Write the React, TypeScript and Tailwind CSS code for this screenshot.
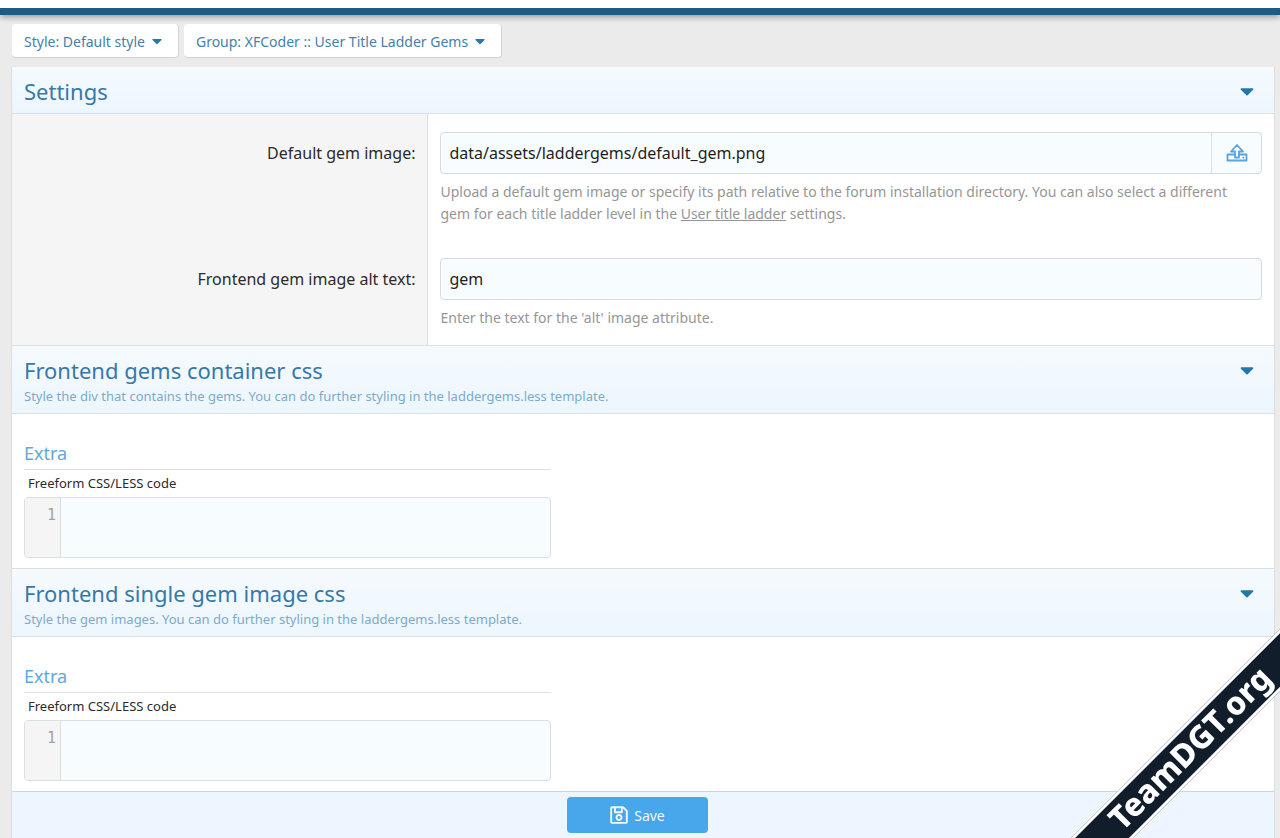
import { FaCaretDown, FaRegSave } from "react-icons/fa";

type SectionHeaderProps = {
  title: string;
  description?: string;
  first?: boolean;
};

type CssPropertyProps = {
  id: string;
  title: string;
  description: string;
};

function MenuButton({ label }: { label: string }) {
  return (
    <button
      type="button"
      className="flex h-[34px] items-center gap-1 rounded border-r border-b border-[#d3d3d3] bg-white pt-[2px] pr-[13px] pl-3 text-[14px] text-[#4580ab]"
    >
      {label}
      <FaCaretDown className="mb-[2px] size-4 text-[#2577b1]" />
    </button>
  );
}

function SectionHeader({ title, description, first }: SectionHeaderProps) {
  return (
    <header
      className={
        "flex items-start justify-between border-b border-[#dbe0e4] bg-linear-to-b from-[#f5fafe] to-[#edf6fe] px-3 pt-[9px] " +
        (first ? "pb-[6px]" : "border-t pb-[3px]")
      }
    >
      <div>
        <h2 className="text-[22px] leading-[31px] text-[#3679a8]">{title}</h2>
        {description && (
          <p className="-mt-1 text-[13px] leading-7 text-[#7cabca]">{description}</p>
        )}
      </div>
      <button type="button" aria-label={`Toggle ${title}`} className="px-1 pt-1 text-[#2577a9]">
        <FaCaretDown className="size-[22px]" />
      </button>
    </header>
  );
}

function UploadIcon() {
  return (
    <svg
      viewBox="0 0 22 20"
      className="h-5 w-[22px]"
      fill="none"
      stroke="currentColor"
      strokeWidth="1.8"
      strokeLinejoin="round"
      strokeLinecap="round"
    >
      <path d="M9 14.500V8.500H5L11 2l6 6.500h-4v6z" />
      <path d="M9 11.500H1.500v6h19v-6H13" />
      <path d="M17.300 14.600h.1" />
    </svg>
  );
}

// Property block with only the freeform "Extra" editor
function CssProperty({ id, title, description }: CssPropertyProps) {
  return (
    <section>
      <SectionHeader title={title} description={description} />
      <div className="px-3 pt-[25px] pb-[10px]">
        <div className="w-[527px] max-w-full">
          <h3 className="border-b border-[#dfdfdf] pb-[2px] text-[18px] leading-7 text-[#62a8de]">
            Extra
          </h3>
          <label htmlFor={id} className="block px-1 text-[13px] leading-[27px] text-[#2b2b2b]">
            Freeform CSS/LESS code
          </label>
          <div className="flex h-[61px] overflow-hidden rounded border border-[#dadfe2] bg-[#f7fcfe]">
            <span className="w-9 border-r border-[#dddddd] bg-[#f5f5f5] pt-1 pr-1 text-right font-['DejaVu_Sans_Mono',monospace] text-[15px] leading-[26px] text-[#a3a3a3]">
              1
            </span>
            <textarea
              id={id}
              className="flex-1 resize-none px-1 pt-1 font-['DejaVu_Sans_Mono',monospace] text-[15px] outline-none"
            />
          </div>
        </div>
      </div>
    </section>
  );
}

export default function App() {
  return (
    <div className="min-h-screen bg-[#ebebeb] font-['Noto_Sans',sans-serif]">
      <div className="relative h-[15px] border-b-[7px] border-[#1d5b85] bg-white shadow-[0_2px_6px_rgba(0,0,0,0.35)]" />

      <nav className="flex gap-[5px] pt-[9px] pb-[9px] pl-3">
        <MenuButton label="Style: Default style" />
        <MenuButton label="Group: XFCoder :: User Title Ladder Gems" />
      </nav>

      <form className="mr-[5px] ml-[11px] border-x border-[#dedede] bg-white">
        <section>
          <SectionHeader title="Settings" first />
          <div className="grid grid-cols-[33%_1fr]">
            <div className="border-r border-[#dedede] bg-[#f5f5f5] pt-[18px] pr-3 text-right">
              <label htmlFor="gem-image" className="text-[16px] leading-[43px] text-[#2b2b2b]">
                Default gem image:
              </label>
            </div>
            <div className="px-3 pt-[18px]">
              <div className="flex h-[42px] overflow-hidden rounded border border-[#d3dce1] bg-[#f7fcfe]">
                <input
                  id="gem-image"
                  type="text"
                  defaultValue="data/assets/laddergems/default_gem.png"
                  className="min-w-0 flex-1 px-2 text-[16px] text-[#1f1f1f] outline-none"
                />
                <button
                  type="button"
                  aria-label="Upload"
                  className="flex w-[50px] items-center justify-center border-l border-[#dbe0e4] text-[#5ba3dd]"
                >
                  <UploadIcon />
                </button>
              </div>
              <p className="pt-[7px] pr-4 pb-2 text-[14px] leading-[22px] text-[#969696]">
                Upload a default gem image or specify its path relative to the forum installation
                directory. You can also select a different gem for each title ladder level in the{" "}
                <a href="#user-title-ladder" className="underline">
                  User title ladder
                </a>{" "}
                settings.
              </p>
            </div>

            <div className="border-r border-[#dedede] bg-[#f5f5f5] pt-[25px] pr-3 text-right">
              <label htmlFor="gem-alt" className="text-[16px] leading-[43px] text-[#2b2b2b]">
                Frontend gem image alt text:
              </label>
            </div>
            <div className="px-3 pt-[25px]">
              <input
                id="gem-alt"
                type="text"
                defaultValue="gem"
                className="block h-[42px] w-full rounded border border-[#d3dce1] bg-[#f7fcfe] px-2 text-[16px] text-[#1f1f1f] outline-none"
              />
              <p className="pt-[7px] pb-4 text-[14px] leading-[22px] text-[#969696]">
                Enter the text for the 'alt' image attribute.
              </p>
            </div>
          </div>
        </section>

        <CssProperty
          id="container-css"
          title="Frontend gems container css"
          description="Style the div that contains the gems. You can do further styling in the laddergems.less template."
        />
        <CssProperty
          id="image-css"
          title="Frontend single gem image css"
          description="Style the gem images. You can do further styling in the laddergems.less template."
        />

        <footer className="flex justify-center border-t border-[#cfd5da] bg-[#edf6fe] pt-[5px] pr-3 pb-[5px]">
          <button
            type="submit"
            className="flex h-9 w-[141px] items-center justify-center gap-[5px] rounded bg-[#47a7ea] text-[14px] text-[#f2f9fe]"
          >
            <FaRegSave className="size-5" />
            Save
          </button>
        </footer>
      </form>

      {/* Corner ribbon */}
      <div className="pointer-events-none fixed right-0 bottom-0 size-[216px] overflow-hidden">
        <div className="absolute right-[-71px] bottom-[67px] flex h-[44px] w-[320px] -rotate-45 items-center justify-center border-y-[3px] border-white bg-[#111d2b] pb-1 text-[32px] leading-none font-extrabold text-white">
          TeamDGT.org
        </div>
      </div>
    </div>
  );
}
